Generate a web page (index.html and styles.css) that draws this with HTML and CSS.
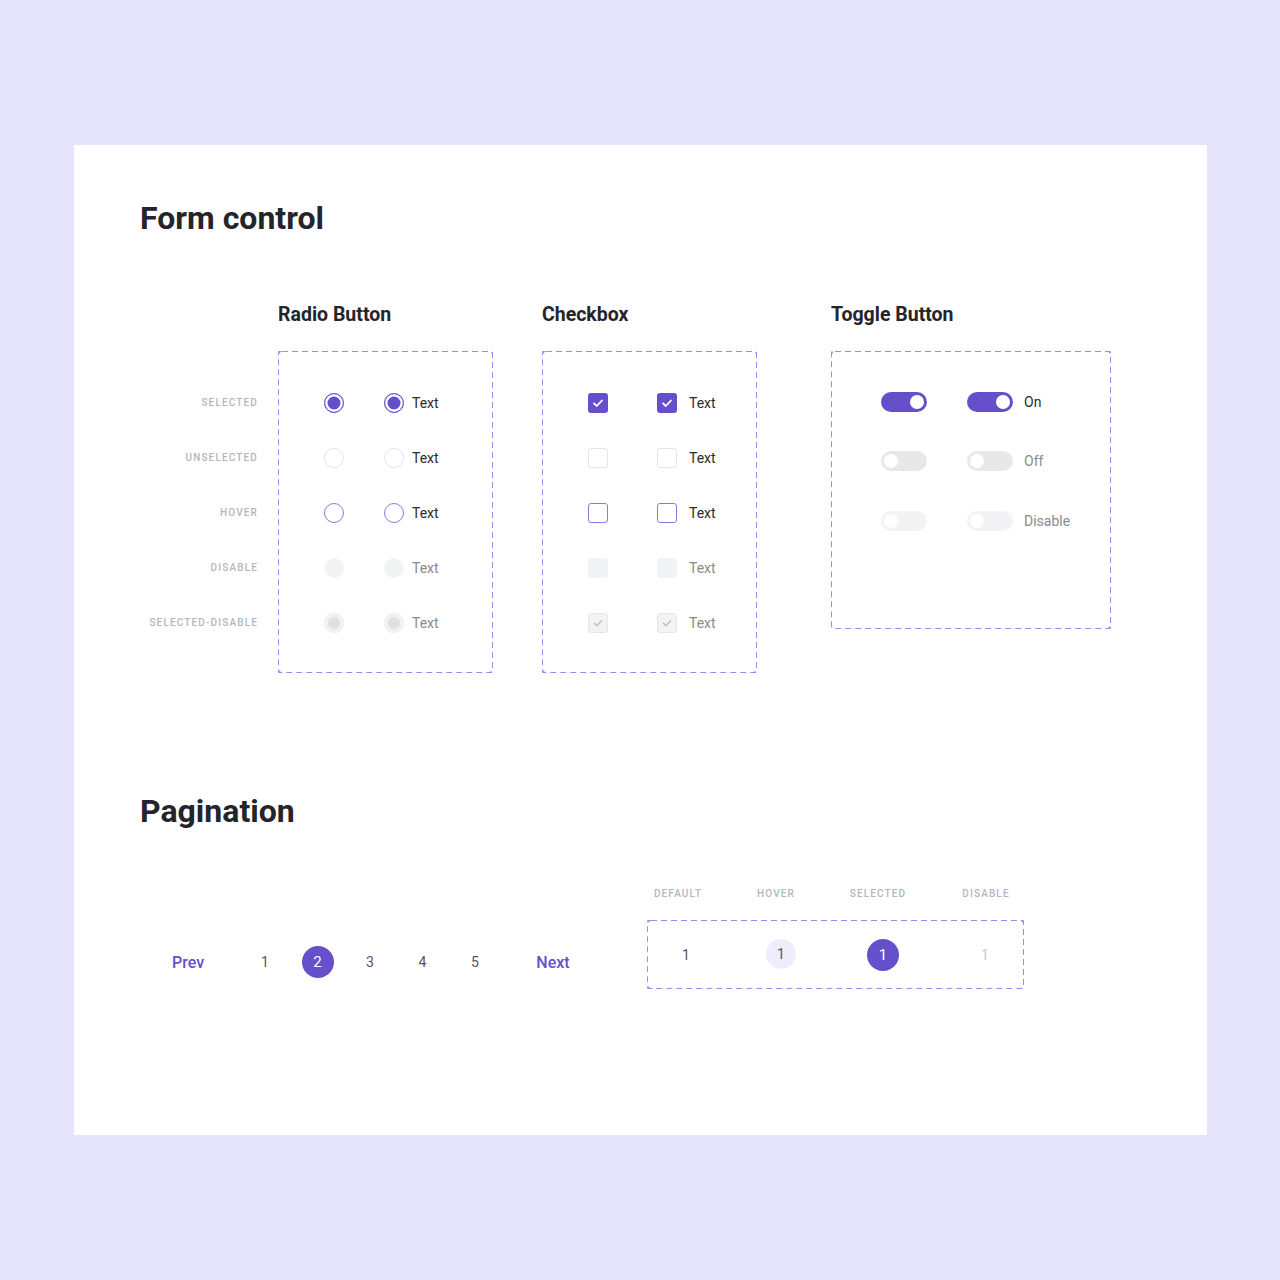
FILE: index.html
```html
<!DOCTYPE html>
<html lang="en">
  <head>
    <meta charset="UTF-8" />
    <title>Form control</title>
    <link rel="stylesheet" href="styles.css">
  </head>
  <body>
    <div class="card">
      <h1 class="section-title">Form control</h1>

      <div class="controls">
        <div class="state-labels">
          <div class="state-row"><span class="state">Selected</span></div>
          <div class="state-row"><span class="state">Unselected</span></div>
          <div class="state-row"><span class="state">Hover</span></div>
          <div class="state-row"><span class="state">Disable</span></div>
          <div class="state-row"><span class="state">Selected-disable</span></div>
        </div>

        <!-- radio -->
        <div class="group">
          <h2 class="group-title">Radio Button</h2>
          <div class="box box-radio">
            <div class="row">
              <span class="radio selected"></span>
              <span class="radio selected"></span><span class="opt-text">Text</span>
            </div>
            <div class="row">
              <span class="radio"></span>
              <span class="radio"></span><span class="opt-text">Text</span>
            </div>
            <div class="row">
              <span class="radio hover"></span>
              <span class="radio hover"></span><span class="opt-text">Text</span>
            </div>
            <div class="row">
              <span class="radio disabled"></span>
              <span class="radio disabled"></span><span class="opt-text muted">Text</span>
            </div>
            <div class="row">
              <span class="radio selected-disabled"></span>
              <span class="radio selected-disabled"></span><span class="opt-text muted">Text</span>
            </div>
          </div>
        </div>

        <!-- checkbox -->
        <div class="group group-check">
          <h2 class="group-title">Checkbox</h2>
          <div class="box box-check">
            <div class="row">
              <span class="check checked"><svg viewBox="0 0 20 20"><polyline points="6,10.3 8.8,13 14,7.5" /></svg></span>
              <span class="check checked"><svg viewBox="0 0 20 20"><polyline points="6,10.3 8.8,13 14,7.5" /></svg></span><span class="opt-text">Text</span>
            </div>
            <div class="row">
              <span class="check"></span>
              <span class="check"></span><span class="opt-text">Text</span>
            </div>
            <div class="row">
              <span class="check hover"></span>
              <span class="check hover"></span><span class="opt-text">Text</span>
            </div>
            <div class="row">
              <span class="check disabled"></span>
              <span class="check disabled"></span><span class="opt-text muted">Text</span>
            </div>
            <div class="row">
              <span class="check checked-disabled"><svg viewBox="0 0 20 20"><polyline points="6,10.3 8.8,13 14,7.5" /></svg></span>
              <span class="check checked-disabled"><svg viewBox="0 0 20 20"><polyline points="6,10.3 8.8,13 14,7.5" /></svg></span><span class="opt-text muted">Text</span>
            </div>
          </div>
        </div>

        <!-- toggle -->
        <div class="group group-toggle">
          <h2 class="group-title">Toggle Button</h2>
          <div class="box box-toggle">
            <div class="row">
              <span class="toggle on"><span class="knob"></span></span>
              <span class="toggle on"><span class="knob"></span></span><span class="opt-text">On</span>
            </div>
            <div class="row">
              <span class="toggle off"><span class="knob"></span></span>
              <span class="toggle off"><span class="knob"></span></span><span class="opt-text muted">Off</span>
            </div>
            <div class="row">
              <span class="toggle disabled"><span class="knob"></span></span>
              <span class="toggle disabled"><span class="knob"></span></span><span class="opt-text muted">Disable</span>
            </div>
          </div>
        </div>
      </div>

      <h1 class="section-title pagination-title">Pagination</h1>

      <div class="pagination">
        <div class="pager">
          <span class="pager-nav">Prev</span>
          <div class="pager-pages">
            <span class="page">1</span>
            <span class="page current">2</span>
            <span class="page">3</span>
            <span class="page">4</span>
            <span class="page">5</span>
          </div>
          <span class="pager-nav">Next</span>
        </div>

        <div class="page-states">
          <div class="page-state-labels">
            <span class="page-state">Default</span>
            <span class="page-state">Hover</span>
            <span class="page-state">Selected</span>
            <span class="page-state">Disable</span>
          </div>
          <div class="box box-pages">
            <span class="page">1</span>
            <span class="page hovered">1</span>
            <span class="page current">1</span>
            <span class="page disabled">1</span>
          </div>
        </div>
      </div>
    </div>
  </body>
</html>
```

FILE: styles.css
```css
body {
  margin: 0;
  background-color: #e5e4fb;
  font-family: Roboto, "Liberation Sans", sans-serif;
}
.card {
  box-sizing: border-box;
  width: 1133px;
  height: 990px;
  margin: 145px 0 0 74px;
  padding: 55px 0 0 66px;
  background-color: #ffffff;
}
.section-title {
  margin: 0;
  font-size: 32px;
  line-height: 36px;
  font-weight: 700;
  color: #23252a;
}
.controls {
  display: flex;
  align-items: flex-start;
  margin-top: 68px;
}
.state-labels {
  width: 118px;
  margin-right: 20px;
  padding-top: 71px;
}
.state-row {
  height: 55px;
  display: flex;
  align-items: center;
  justify-content: flex-end;
}
.state,
.page-state {
  font-size: 10px;
  font-weight: 500;
  letter-spacing: 1.15px;
  text-transform: uppercase;
  color: #b4b6be;
}
.group {
  width: 215px;
}
.group-check {
  margin-left: 49px;
}
.group-toggle {
  width: 280px;
  margin-left: 74px;
}
.group-title {
  margin: 0 0 25px;
  font-size: 19.5px;
  line-height: 22px;
  font-weight: 700;
  color: #23252a;
}
.box {
  box-sizing: border-box;
  background-image: url("data:image/svg+xml,%3Csvg xmlns='http://www.w3.org/2000/svg'%3E%3Crect width='100%25' height='100%25' fill='none' rx='4' stroke='%239d8cf0' stroke-width='2' stroke-dasharray='6 4'/%3E%3C/svg%3E");
}
.box-radio,
.box-check {
  padding: 24px 0 23px 46px;
}
.box-toggle {
  height: 278px;
  padding: 21px 0 0 50px;
}
.row {
  display: flex;
  align-items: center;
  height: 55px;
}
.box-toggle .row {
  height: 59px;
}
.box-toggle .row:nth-child(3) {
  height: 61px;
}
.opt-text {
  font-size: 14px;
  color: #2b2b2b;
  margin-left: 8px;
}
.opt-text.muted {
  color: #8a8a8a;
}

/* radio */
.radio {
  box-sizing: border-box;
  width: 20px;
  height: 20px;
  border-radius: 50%;
  border: 1.5px solid #e3e3e6;
  background-color: #ffffff;
}
.radio + .radio {
  margin-left: 40px;
}
.radio.selected {
  border-color: #654fcb;
  background-color: #654fcb;
  box-shadow: inset 0 0 0 2.5px #ffffff;
}
.radio.hover {
  border-color: #8a78e2;
}
.radio.disabled {
  border: none;
  background-color: #f2f3f5;
}
.radio.selected-disabled {
  border: none;
  background-color: #e0e0e2;
  box-shadow: inset 0 0 0 4px #f2f2f4;
}

/* checkbox */
.check {
  box-sizing: border-box;
  width: 20px;
  height: 20px;
  border-radius: 3px;
  border: 1.5px solid #e5e5e8;
  background-color: #ffffff;
  display: flex;
}
.check + .check {
  margin-left: 49px;
}
.box-check .opt-text {
  margin-left: 12px;
}
.check svg {
  width: 100%;
  height: 100%;
}
.check polyline {
  fill: none;
  stroke: #ffffff;
  stroke-width: 1.8;
  stroke-linecap: round;
  stroke-linejoin: round;
}
.check.checked {
  border: none;
  background-color: #654fcb;
}
.check.hover {
  border-color: #8a78e2;
}
.check.disabled {
  border: none;
  background-color: #f2f3f5;
}
.check.checked-disabled {
  border: 1px solid #e6e6e8;
  background-color: #f3f3f4;
}
.check.checked-disabled polyline {
  stroke: #bdbdc0;
  stroke-width: 1.4;
}

/* toggle */
.toggle {
  box-sizing: border-box;
  width: 46px;
  height: 20px;
  border-radius: 10px;
  padding: 0 3px;
  display: flex;
  align-items: center;
}
.toggle + .toggle {
  margin-left: 40px;
}
.box-toggle .opt-text {
  margin-left: 11px;
}
.knob {
  width: 14px;
  height: 14px;
  border-radius: 50%;
  background-color: #ffffff;
}
.toggle.on {
  background-color: #654fcb;
  justify-content: flex-end;
}
.toggle.off {
  background-color: #e8e8ea;
}
.toggle.disabled {
  background-color: #f3f3f5;
}

/* pagination */
.pagination-title {
  margin-top: 120px;
}
.pagination {
  display: flex;
  align-items: flex-end;
  margin-top: 59px;
}
.pager {
  box-sizing: border-box;
  width: 507px;
  padding-left: 16px;
  margin-bottom: 11px;
  display: flex;
  align-items: center;
}
.pager-nav {
  width: 64px;
  text-align: center;
  font-size: 16px;
  font-weight: 500;
  color: #654fcb;
  padding-top: 1px;
}
.pager-pages {
  display: flex;
  gap: 20.5px;
  margin: 0 30px 0 29px;
}
.page {
  width: 32px;
  height: 32px;
  border-radius: 50%;
  display: flex;
  align-items: center;
  justify-content: center;
  font-size: 14px;
  color: #555559;
}
.page.current {
  background-color: #654fcb;
  color: #ffffff;
  font-size: 15px;
}
.page.hovered {
  width: 30px;
  height: 30px;
  margin-top: -2px;
  background-color: #efedfc;
}
.page.disabled {
  color: #c9c9cc;
}
.page-states {
  width: 377px;
}
.page-state-labels {
  display: flex;
  margin-bottom: 20px;
  line-height: 12px;
}
.page-state {
  width: 32px;
  display: flex;
  justify-content: center;
  white-space: nowrap;
}
.page-state:nth-child(1) {
  margin-left: 15px;
}
.page-state:nth-child(2) {
  margin-left: 66px;
}
.page-state:nth-child(3) {
  margin-left: 70px;
}
.page-state:nth-child(4) {
  margin-left: 76px;
}
.box-pages {
  height: 69px;
  padding: 0 0 0 23px;
  display: flex;
  align-items: center;
}
.box-pages .page.hovered {
  margin-left: 64px;
}
.box-pages .page.current {
  margin-left: 71px;
}
.box-pages .page.disabled {
  margin-left: 70px;
}
```
